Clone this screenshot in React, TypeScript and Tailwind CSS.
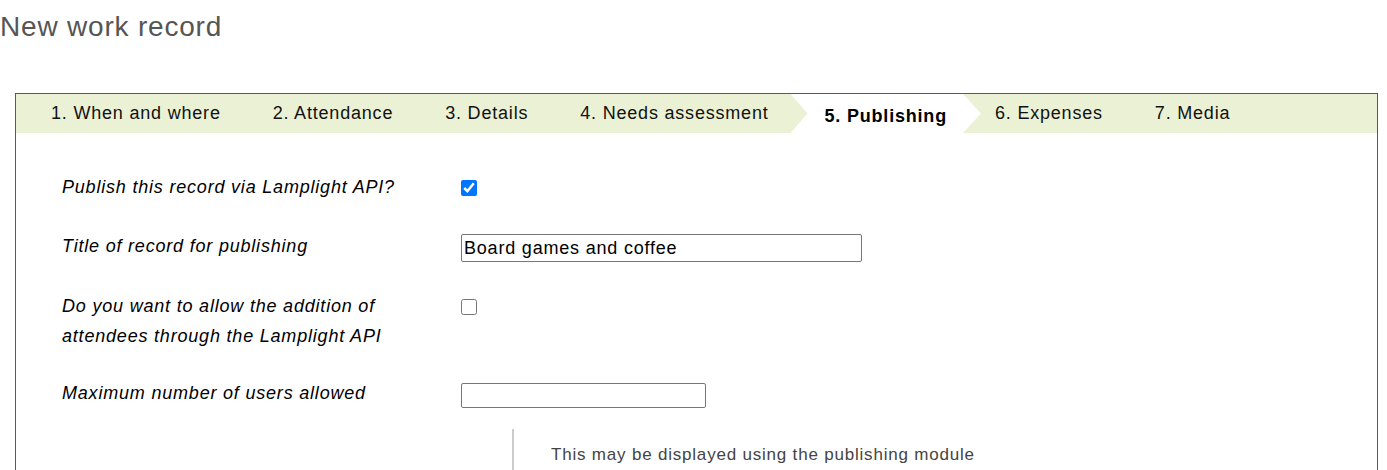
import React from "react";

const tabs = [
  "1. When and where",
  "2. Attendance",
  "3. Details",
  "4. Needs assessment",
  "5. Publishing",
  "6. Expenses",
  "7. Media",
];

export default function App() {
  return (
    <div className="min-h-[470px] bg-white text-black tracking-[0.8px]" style={{ fontFamily: '"Liberation Sans", Arial, sans-serif' }}>
      <h1 className="pt-[11px] text-[28px] leading-[32px] font-normal text-[#555555]">New work record</h1>
      <div className="ml-[15px] mr-[9px] mt-[50px] border-l border-r border-t border-[#8b4a2e] min-h-[377px]">
        <div className="flex h-[39px] bg-[#ebf1d4] pl-[9px] text-[18px] leading-[39px] text-[#111]">
          {tabs.map((t, i) =>
            i === 4 ? (
              <div key={t} className="relative pl-[30px] pr-[22px] whitespace-nowrap">
                <div
                  className="absolute top-0 bottom-0 left-[-4px] right-[-12px] bg-white"
                  style={{ clipPath: "polygon(0 0, calc(100% - 18px) 0, 100% 50%, calc(100% - 18px) 100%, 0 100%, 17px 50%)" }}
                />
                <span className="relative block pt-[3px] font-bold text-black">{t}</span>
              </div>
            ) : (
              <div key={t} className="px-[26px] whitespace-nowrap">
                {t}
              </div>
            )
          )}
        </div>
        <div className="pl-[46px] pt-[39px] text-[18px] leading-[30px]">
          <div className="flex flex-col">
            <div className="flex">
              <div className="w-[399px] pr-[40px] italic">Publish this record via Lamplight API?</div>
              <input type="checkbox" defaultChecked className="mt-[8px] h-4 w-4 accent-[#0075ff]" />
            </div>
            <div className="flex mt-[29px]">
              <div className="w-[399px] pr-[40px] italic">Title of record for publishing</div>
              <input
                type="text"
                defaultValue="Board games and coffee"
                className="mt-[3px] h-[28px] w-[401px] rounded-[2px] border border-[#767676] px-[2px] text-[18px] leading-[26px] text-black"
              />
            </div>
            <div className="flex mt-[29px]">
              <div className="w-[399px] pr-[60px] italic">Do you want to allow the addition of attendees through the Lamplight API</div>
              <input type="checkbox" className="mt-[8px] h-4 w-4" />
            </div>
            <div className="flex mt-[27px]">
              <div className="w-[399px] pr-[40px] italic">Maximum number of users allowed</div>
              <input
                type="text"
                className="mt-[5px] h-[25px] w-[245px] rounded-[2px] border border-[#767676] px-[2px] text-[16px]"
              />
            </div>
          </div>
          <div className="ml-[450px] mt-[21px] border-l-2 border-[#cccccc] pl-[37px] pt-[14px] pb-[6px] text-[17px] leading-[24px] text-[#444444]">
            This may be displayed using the publishing module
          </div>
        </div>
      </div>
    </div>
  );
}
